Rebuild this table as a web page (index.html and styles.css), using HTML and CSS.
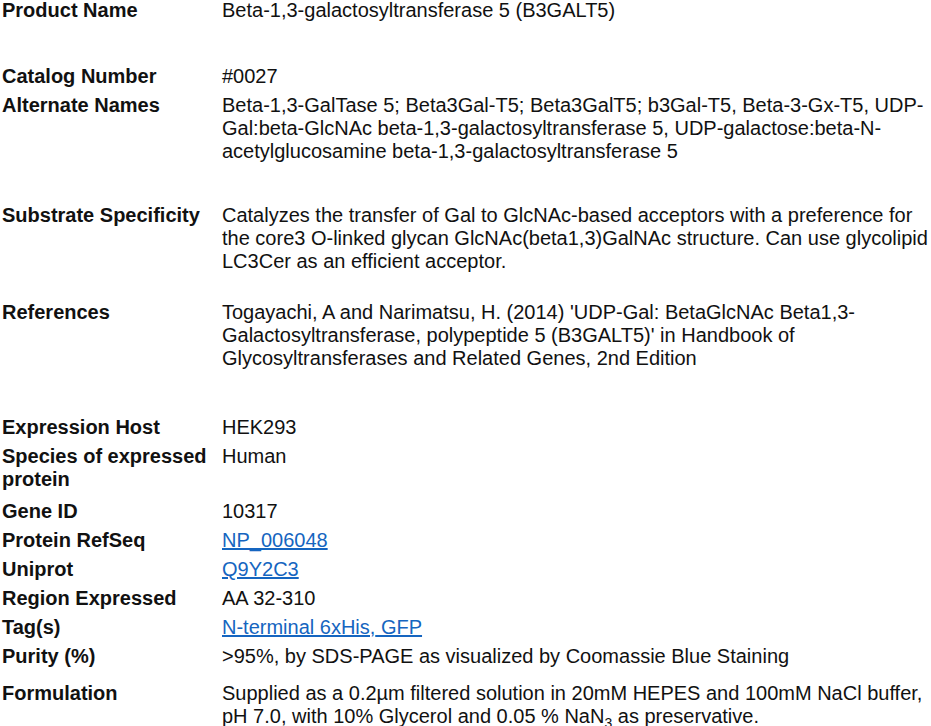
FILE: index.html
```html
<!DOCTYPE html>
<html lang="en">
<head>
<meta charset="utf-8">
<title>Beta-1,3-galactosyltransferase 5 (B3GALT5)</title>
<link rel="stylesheet" href="styles.css">
</head>
<body>
<div class="spec">
  <div class="row gap-37"><div class="label">Product Name</div><div class="value">Beta-1,3-galactosyltransferase 5 (B3GALT5)</div></div>
  <div class="row"><div class="label">Catalog Number</div><div class="value">#0027</div></div>
  <div class="row gap-35"><div class="label">Alternate Names</div><div class="value">Beta-1,3-GalTase 5; Beta3Gal-T5; Beta3GalT5; b3Gal-T5, Beta-3-Gx-T5, UDP-Gal:beta-GlcNAc beta-1,3-galactosyltransferase 5, UDP-galactose:beta-N-acetylglucosamine beta-1,3-galactosyltransferase 5</div></div>
  <div class="row gap-22"><div class="label">Substrate Specificity</div><div class="value">Catalyzes the transfer of Gal to GlcNAc-based acceptors with a preference for the core3 O-linked glycan GlcNAc(beta1,3)GalNAc structure. Can use glycolipid LC3Cer as an efficient acceptor.</div></div>
  <div class="row gap-40"><div class="label">References</div><div class="value">Togayachi, A and Narimatsu, H. (2014) 'UDP-Gal: BetaGlcNAc Beta1,3-Galactosyltransferase, polypeptide 5 (B3GALT5)' in Handbook of Glycosyltransferases and Related Genes, 2nd Edition</div></div>
  <div class="row"><div class="label">Expression Host</div><div class="value">HEK293</div></div>
  <div class="row gap-3"><div class="label">Species of expressed protein</div><div class="value">Human</div></div>
  <div class="row"><div class="label">Gene ID</div><div class="value">10317</div></div>
  <div class="row"><div class="label">Protein RefSeq</div><div class="value"><a href="#">NP_006048</a></div></div>
  <div class="row"><div class="label">Uniprot</div><div class="value"><a href="#">Q9Y2C3</a></div></div>
  <div class="row"><div class="label">Region Expressed</div><div class="value">AA 32-310</div></div>
  <div class="row"><div class="label">Tag(s)</div><div class="value"><a href="#">N-terminal 6xHis,</a><a href="#"> GFP</a></div></div>
  <div class="row gap-8"><div class="label">Purity (%)</div><div class="value">&gt;95%, by SDS-PAGE as visualized by Coomassie Blue Staining</div></div>
  <div class="row"><div class="label">Formulation</div><div class="value">Supplied as a 0.2µm filtered solution in 20mM HEPES and 100mM NaCl buffer, pH 7.0, with 10% Glycerol and 0.05 % NaN<sub>3</sub> as preservative.</div></div>
</div>
</body>
</html>
```
FILE: styles.css
```css
html, body {
  margin: 0;
  padding: 0;
  background: #ffffff;
}

body {
  font-family: "Liberation Sans", Arial, sans-serif;
  font-size: 20px;
  line-height: 23px;
  color: #111111;
}

.spec {
  margin-top: -1px;
  padding: 0 2px;
}

.row {
  display: grid;
  grid-template-columns: 220px 1fr;
  padding-bottom: 6px;
}

.label {
  font-weight: bold;
}

.value a {
  color: #1565c0;
  text-decoration: underline;
}

.value sub {
  font-size: 14px;
  line-height: 0;
  vertical-align: -5px;
}

.gap-3 { margin-bottom: 3px; }
.gap-8 { margin-bottom: 8px; }
.gap-22 { margin-bottom: 22px; }
.gap-35 { margin-bottom: 35px; }
.gap-37 { margin-bottom: 37px; }
.gap-40 { margin-bottom: 40px; }
```
